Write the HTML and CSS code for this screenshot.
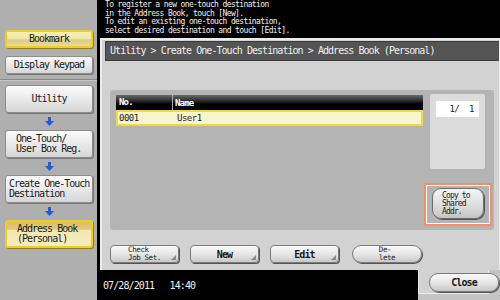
FILE: index.html
```html
<!DOCTYPE html>
<html>
<head>
<meta charset="utf-8">
<link rel="stylesheet" href="styles.css">
</head>
<body>
<div class="screen">
  <aside class="sidebar">
    <div class="sb-top">
      <div class="sbtn yellow short">Bookmark</div>
      <div class="sbtn short">Display Keypad</div>
    </div>
    <div class="sb-flow">
      <div class="sbtn tall center">Utility</div>
      <div class="arrow"><svg width="9" height="9" viewBox="0 0 9 9"><path d="M3 0h3v4h3L4.5 9 0 4h3z" fill="#2a5cc8"/></svg></div>
      <div class="sbtn tall indent">One-Touch/<br>User Box Reg.</div>
      <div class="arrow"><svg width="9" height="9" viewBox="0 0 9 9"><path d="M3 0h3v4h3L4.5 9 0 4h3z" fill="#2a5cc8"/></svg></div>
      <div class="sbtn tall">Create One-Touch<br>Destination</div>
      <div class="arrow"><svg width="9" height="9" viewBox="0 0 9 9"><path d="M3 0h3v4h3L4.5 9 0 4h3z" fill="#2a5cc8"/></svg></div>
      <div class="sbtn tall indent yellow2">Address Book<br>(Personal)</div>
    </div>
  </aside>
  <main class="main">
    <div class="msg">To register a new one-touch destination<br>in the Address Book, touch [New].<br>To edit an existing one-touch destination,<br>select desired destination and touch [Edit].</div>
    <div class="frame">
      <div class="title">Utility &gt; Create One-Touch Destination &gt; Address Book (Personal)</div>
      <div class="listarea">
        <div class="list">
          <div class="lhead"><span class="c1">No.</span><span class="c2">Name</span></div>
          <div class="lrow"><span class="c1">0001</span><span class="c2">User1</span></div>
        </div>
        <div class="rcol">
          <div class="pagebox"><div class="pagenum">1/&nbsp;&nbsp;1</div></div>
          <div class="hilite"><div class="copybtn">Copy to<br>Shared<br>Addr.</div></div>
        </div>
      </div>
      <div class="btnrow">
        <div class="bbtn small corner">Check<br>Job Set.</div>
        <div class="bbtn corner">New</div>
        <div class="bbtn corner">Edit</div>
        <div class="bbtn small pill">De-<br>lete</div>
      </div>
    </div>
    <div class="footer">
      <div class="status">07/28/2011&nbsp;&nbsp;&nbsp;14:40</div>
      <div class="closetab"><div class="bbtn pill closebtn">Close</div></div>
      <div class="outer"></div>
    </div>
  </main>
</div>
</body>
</html>
```
FILE: styles.css
```css
* { box-sizing: border-box; }
html, body { margin: 0; padding: 0; }
body {
  width: 500px;
  height: 300px;
  overflow: hidden;
  background: #000;
  font-family: "DejaVu Sans Mono", "Liberation Mono", monospace;
  color: #1a1a1a;
}
.screen { display: flex; width: 500px; height: 300px; }

.sidebar {
  width: 97px;
  background: #afafaf;
  display: flex;
  flex-direction: column;
}
.sb-top {
  height: 80px;
  padding: 30px 0 0 5px;
  display: flex;
  flex-direction: column;
  gap: 8px;
  border-bottom: 1px solid #8a8a8a;
  box-shadow: 0 1px 0 #c8c8c8;
}
.sb-flow {
  padding: 5px 0 0 5px;
  display: flex;
  flex-direction: column;
}
.sbtn {
  width: 88px;
  background: linear-gradient(#fbfbfb, #e6e6e6 60%, #d6d6d6);
  border: 1px solid #8c8c8c;
  border-radius: 3px;
  box-shadow: 1px 1px 0 #777;
  font-size: 10px;
  letter-spacing: -1px;
  line-height: 10px;
  display: flex;
  align-items: center;
  padding-left: 3px;
  white-space: nowrap;
}
.sbtn.short { height: 18px; justify-content: center; padding-left: 0; }
.sbtn.tall { height: 28px; }
.sbtn.center { justify-content: center; padding-left: 0; }
.sbtn.indent { padding-left: 10px; }
.sbtn.yellow {
  background: linear-gradient(#f6eeb8, #f2e6a6 50%, #dccb86 55%, #e9db9c);
  border: 2px solid #f2cf10;
  box-shadow: 1px 1px 0 #8a7a40;
}
.sbtn.yellow2 {
  background: linear-gradient(#d9bd6a, #e2ca7c 30%, #f3e7b2 35%, #f6ecbe);
  border: 2px solid #f2cf10;
  box-shadow: 1px 1px 0 #8a7a40;
}
.arrow {
  height: 17px;
  display: flex;
  align-items: center;
  justify-content: center;
  width: 88px;
}

.main {
  width: 403px;
  display: flex;
  flex-direction: column;
  background: #000;
}
.msg {
  height: 38px;
  padding: 1px 0 0 8px;
  color: #f2f2f2;
  font-size: 8px;
  line-height: 8.5px;
  letter-spacing: -0.62px;
  white-space: nowrap;
}
.frame {
  margin-left: 3px;
  width: 400px;
  height: 232px;
  background: #d2d2d2;
  border-left: 2px solid #ececec;
  border-top: 2px solid #ececec;
  border-right: 1px solid #ececec;
  display: flex;
  flex-direction: column;
  box-shadow: 3px 0 0 #c4c4c4;
}
.title {
  margin: 1px 0 0 3px;
  height: 20px;
  background: #545454;
  border: 1px solid #3a3a3a;
  border-right: none;
  color: #f0f0f0;
  font-size: 10px;
  letter-spacing: -0.95px;
  line-height: 18px;
  padding-left: 4px;
  white-space: nowrap;
}
.listarea {
  margin: 29px 5px 0 8px;
  height: 140px;
  background: #b4b4b4;
  border-radius: 3px;
  display: flex;
  padding: 4px 6px 0 6px;
  gap: 7px;
}
.list { width: 307px; }
.lhead {
  height: 15px;
  background: linear-gradient(#6a6a6a, #2a2a2a 40%, #000 60%);
  color: #fff;
  font-size: 9px;
  font-weight: bold;
  letter-spacing: -0.8px;
  display: flex;
  align-items: center;
  margin-top: 1px;
}
.lrow {
  height: 16px;
  background: #f8f6cc;
  border: 2px solid #f0d84a;
  font-size: 9px;
  letter-spacing: -0.5px;
  display: flex;
  align-items: center;
}
.c1 { width: 57px; padding-left: 3px; }
.lhead .c1 { border-right: 1px solid #aaa; height: 15px; line-height: 15px; }
.c2 { padding-left: 2px; }
.lrow .c1 { padding-left: 1px; width: 57px; }
.rcol { width: 55px; display: flex; flex-direction: column; }
.pagebox {
  height: 75px;
  background: #dcdcdc;
  border-radius: 2px;
  padding: 7px 6px 0 6px;
}
.pagenum {
  height: 16px;
  background: #fff;
  font-size: 9px;
  text-align: right;
  padding-right: 5px;
  line-height: 16px;
  letter-spacing: -0.5px;
}
.hilite {
  margin: 14px -7px 0 -6px;
  height: 43px;
  border: 2px solid #f0906a;
  box-shadow: inset 0 0 0 1px #fff;
  padding: 3px 0 0 6px;
}
.copybtn {
  width: 52px;
  height: 31px;
  background: linear-gradient(#f4f4f4, #dcdcdc 60%, #c4c4c4);
  border: 1px solid #6c6c6c;
  border-radius: 9px;
  box-shadow: 1px 1px 0 #555;
  font-size: 8px;
  line-height: 8px;
  letter-spacing: -0.85px;
  padding: 3px 0 0 9px;
}
.btnrow {
  display: flex;
  gap: 11px;
  margin: 15px 0 0 8px;
}
.bbtn {
  position: relative;
  width: 69px;
  height: 18px;
  background: linear-gradient(#fafafa, #e4e4e4 55%, #c8c8c8);
  border: 1px solid #7a7a7a;
  border-radius: 4px;
  box-shadow: 1px 1px 0 #555;
  font-size: 10px;
  font-weight: bold;
  letter-spacing: -0.9px;
  display: flex;
  align-items: center;
  justify-content: center;
  text-align: center;
}
.bbtn.small {
  font-size: 7.5px;
  line-height: 8px;
  letter-spacing: -0.4px;
  font-weight: normal;
  text-align: left;
}
.bbtn.pill { border-radius: 9px; width: 70px; margin-left: 2px; }
.bbtn.corner::after {
  content: "";
  position: absolute;
  right: 2px;
  bottom: 2px;
  border-left: 5px solid transparent;
  border-bottom: 5px solid #8a8a8a;
}
.footer { flex: 1; display: flex; background: #c4c4c4; align-items: flex-start; }
.status {
  width: 321px;
  height: 100%;
  background: #000;
  color: #f2f2f2;
  font-size: 10px;
  letter-spacing: -0.9px;
  padding: 10px 0 0 6px;
}
.closetab {
  width: 71px;
  background: #d2d2d2;
  border-left: 1px solid #ececec;
  border-right: 1px solid #ececec;
  border-bottom: 1px solid #ececec;
  height: 24px;
  padding: 3px 0 0 8px;
}
.closebtn { width: 59px; height: 19px; margin-left: 0; }
.outer { flex: 1; background: #c4c4c4; }
```
